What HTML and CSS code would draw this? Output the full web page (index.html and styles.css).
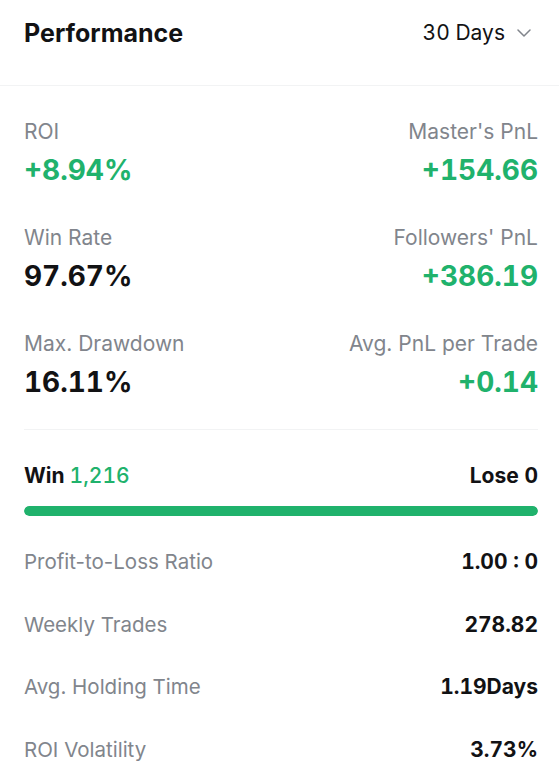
FILE: index.html
```html
<!DOCTYPE html>
<html>
<head>
<meta charset="utf-8">
<link rel="stylesheet" href="styles.css">
</head>
<body>
<div class="card">
  <div class="header">
    <div class="title">Performance</div>
    <div class="period">
      <span class="num">30 Days</span>
      <svg class="chev" width="14" height="8" viewBox="0 0 14 8"><path d="M1 1l6 6 6-6" fill="none" stroke="#81858c" stroke-width="1.5" stroke-linecap="round" stroke-linejoin="round"/></svg>
    </div>
  </div>
  <div class="metrics">
    <div class="metric"><div class="label">ROI</div><div class="value green">+8.94%</div></div>
    <div class="metric right"><div class="label">Master's PnL</div><div class="value green">+154.66</div></div>
    <div class="metric"><div class="label">Win Rate</div><div class="value">97.67%</div></div>
    <div class="metric right"><div class="label">Followers' PnL</div><div class="value green">+386.19</div></div>
    <div class="metric"><div class="label">Max. Drawdown</div><div class="value">16.11%</div></div>
    <div class="metric right"><div class="label">Avg. PnL per Trade</div><div class="value green">+0.14</div></div>
  </div>
  <div class="winlose">
    <div class="wl-row">
      <div>Win <span class="green-n">1,216</span></div>
      <div class="num">Lose 0</div>
    </div>
    <div class="bar"><div class="bar-fill" style="width:100%"></div></div>
  </div>
  <div class="stats">
    <div class="stat"><span class="s-label">Profit-to-Loss Ratio</span><span class="s-value">1.00 : 0</span></div>
    <div class="stat"><span class="s-label">Weekly Trades</span><span class="s-value">278.82</span></div>
    <div class="stat"><span class="s-label">Avg. Holding Time</span><span class="s-value">1.19Days</span></div>
    <div class="stat"><span class="s-label">ROI Volatility</span><span class="s-value">3.73%</span></div>
  </div>
</div>
</body>
</html>
```

FILE: styles.css
```css
* { box-sizing: border-box; }
html, body { margin: 0; padding: 0; background: #fff; }
body {
  font-family: Inter, "Noto Sans", sans-serif;
  color: #121214;
  width: 559px;
}
.num, .value, .green-n, .s-value { font-variant-numeric: tabular-nums; }
.card { display: flex; flex-direction: column; }
.header {
  height: 86px;
  display: flex;
  align-items: center;
  justify-content: space-between;
  padding: 0 28px 0 24px;
  border-bottom: 1px solid #f2f3f4;
}
.title { font-size: 25px; font-weight: 700; line-height: 30px; margin-top: -20px; }
.period { display: flex; align-items: center; gap: 12px; font-size: 21px; line-height: 28px; margin-top: -20px; }
.chev { display: block; margin-top: 1px; }
.metrics {
  display: grid;
  grid-template-columns: 1fr 1fr;
  row-gap: 36px;
  padding: 32px 21px 29px 24px;
}
.metric { display: flex; flex-direction: column; gap: 6px; }
.metric.right { align-items: flex-end; }
.label { font-size: 21px; line-height: 28px; color: #81858c; }
.value { font-size: 28px; line-height: 36px; font-weight: 700; color: #121214; }
.green { color: #20b26c; }
.winlose {
  margin: 0 21px 0 24px;
  border-top: 1px solid #f2f3f4;
  padding-top: 32px;
}
.wl-row {
  display: flex;
  justify-content: space-between;
  font-size: 21px;
  line-height: 28px;
  font-weight: 700;
}
.green-n { color: #20b26c; font-weight: 500; }
.bar { margin-top: 16px; height: 10px; border-radius: 5px; background: #f3f5f7; overflow: hidden; }
.bar-fill { height: 100%; background: #20b26c; border-radius: 5px; }
.stats {
  display: flex;
  flex-direction: column;
  gap: 34.7px;
  padding: 32px 21px 0 24px;
}
.stat {
  display: flex;
  justify-content: space-between;
  align-items: center;
  line-height: 28px;
  font-size: 20.5px;
}
.s-label { color: #81858c; }
.s-value { font-weight: 700; color: #121214; font-size: 21px; }
```
